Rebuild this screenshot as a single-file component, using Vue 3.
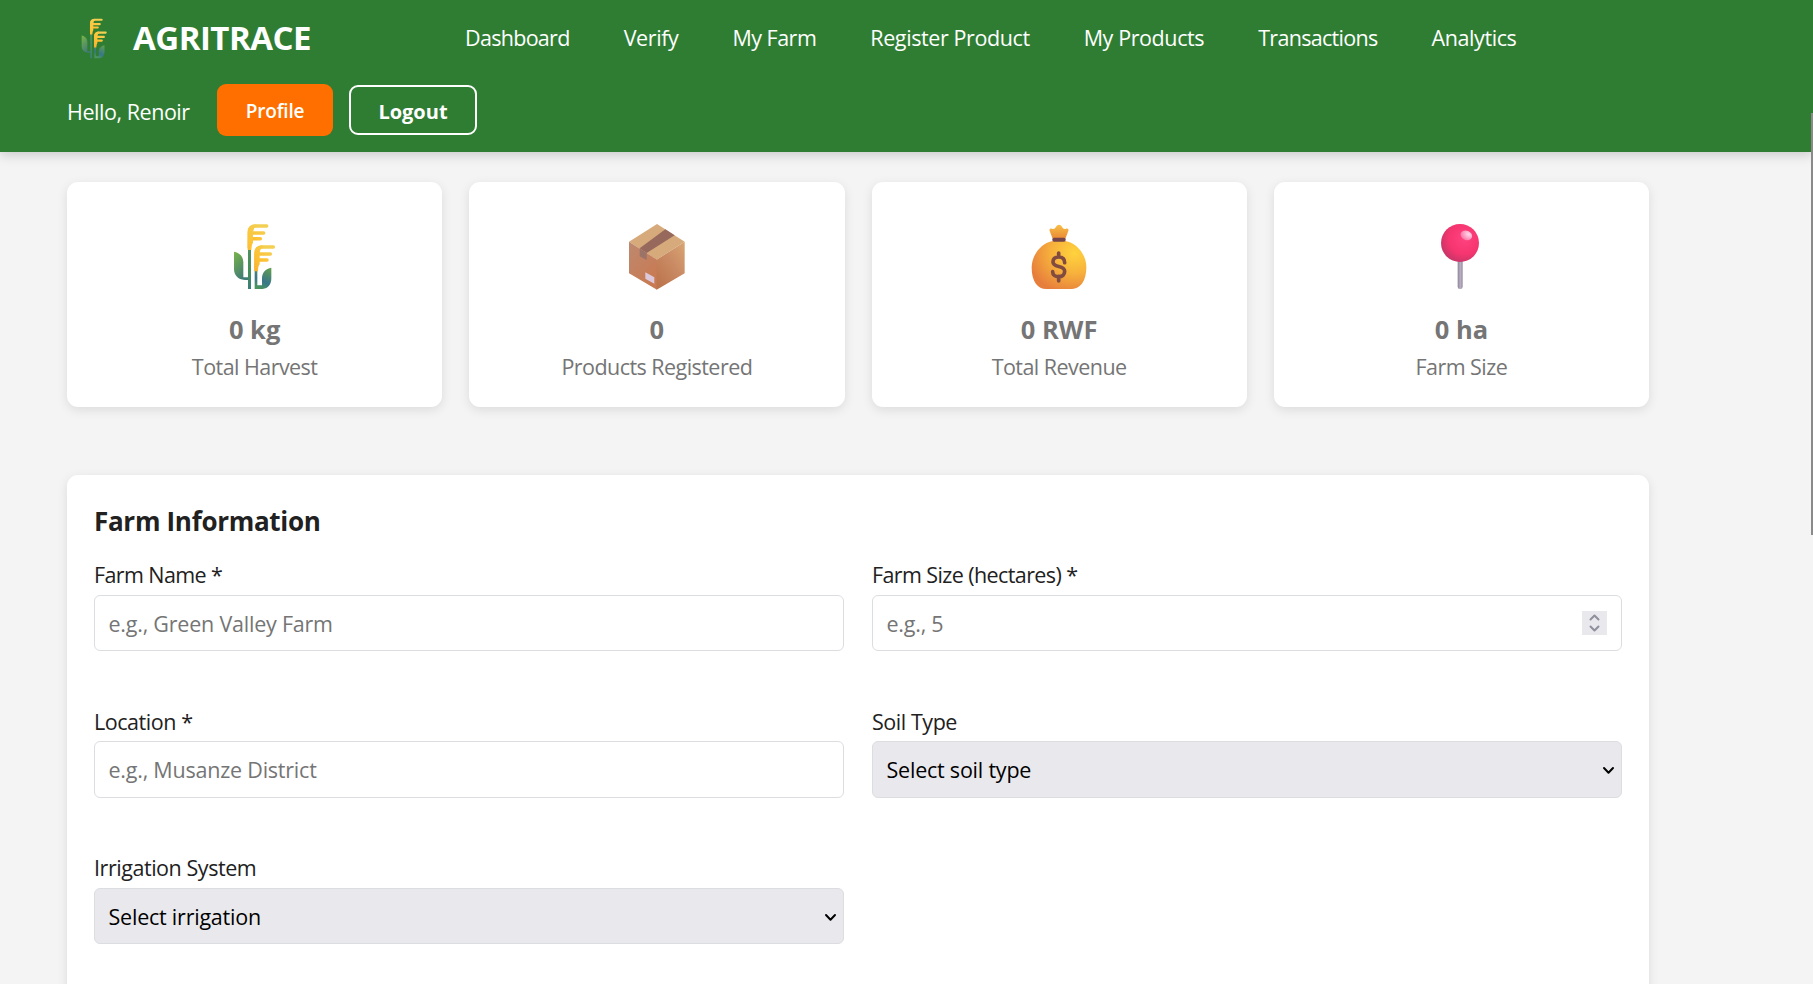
<script setup>
import { h } from 'vue'

const links = [
  { label: 'Dashboard', cls: 'tight' },
  { label: 'Verify', cls: '' },
  { label: 'My Farm', cls: 'snug' },
  { label: 'Register Product', cls: '' },
  { label: 'My Products', cls: '' },
  { label: 'Transactions', cls: 'tight' },
  { label: 'Analytics', cls: '' }
]

const stats = [
  { icon: 'crop', value: '0 kg', label: 'Total Harvest' },
  { icon: 'box', value: '0', label: 'Products Registered' },
  { icon: 'money', value: '0 RWF', label: 'Total Revenue' },
  { icon: 'pin', value: '0 ha', label: 'Farm Size' }
]

// Shared between the brand mark and the harvest card.
const CropIcon = () =>
  h('svg', { viewBox: '0 0 270 270' }, [
    h('path', { fill: 'url(#leafL)', d: 'M72 125c15 2 27 13 28 31v46h15v8h-11c-20-2-32-14-32-33z' }),
    h('path', { fill: 'url(#leafR)', d: 'M184 173c-17 3-28 14-28 33v20h-14v-46h-8v57h24c16-1 26-13 26-32z' }),
    h('path', { fill: 'url(#stem)', d: 'M114 112h9v125h-9z' }),
    h('g', { fill: 'none', stroke: 'url(#grain)', 'stroke-width': 10.5, 'stroke-linecap': 'round', 'stroke-linejoin': 'round' }, [
      h('path', { d: 'M118 113V68q0-20 21-20h31M121 69h40M121 86h30' }),
      h('path', { d: 'M138 176v-46q0-19 21-19h31M141 132h40M141 150h30' })
    ]),
    h('path', { fill: 'url(#grain)', d: 'M113 120V65q0-20 22-22l7 3q-12 5-13 20v33q-4 3-5 21zM133 184v-55q0-21 22-23l7 3q-12 5-13 20v34q-5 4-5 21z' })
  ])
</script>

<template>
  <div class="page">
    <svg class="defs" width="0" height="0" aria-hidden="true">
      <defs>
        <linearGradient id="leafL" x1="0" y1="0" x2=".5" y2="1"><stop stop-color="#79b546" /><stop offset="1" stop-color="#417b78" /></linearGradient>
        <linearGradient id="leafR" x1=".8" y1="0" x2=".4" y2="1"><stop stop-color="#5f9d50" /><stop offset=".65" stop-color="#38768a" /><stop offset="1" stop-color="#49945d" /></linearGradient>
        <linearGradient id="stem" x1="0" y1="0" x2="0" y2="1"><stop stop-color="#4f9160" /><stop offset=".6" stop-color="#458c5b" /><stop offset="1" stop-color="#397f79" /></linearGradient>
        <linearGradient id="grain" x1="0" y1="1" x2=".5" y2="0"><stop stop-color="#f5a82c" /><stop offset=".5" stop-color="#fdc235" /><stop offset="1" stop-color="#f3cf52" /></linearGradient>
        <linearGradient id="boxL" x1="0" y1="0" x2=".6" y2="1"><stop stop-color="#bd8970" /><stop offset="1" stop-color="#c97a52" /></linearGradient>
        <linearGradient id="boxR" x1="1" y1="0" x2=".2" y2="1"><stop stop-color="#d9a673" /><stop offset=".5" stop-color="#c98a63" /><stop offset="1" stop-color="#bd754d" /></linearGradient>
        <radialGradient id="bag" cx=".78" cy=".25" r=".85"><stop stop-color="#ffd33d" /><stop offset=".5" stop-color="#f7b13c" /><stop offset="1" stop-color="#e77f3c" /></radialGradient>
        <linearGradient id="bagTop" x1="0" y1="0" x2="0" y2="1"><stop stop-color="#f9c044" /><stop offset="1" stop-color="#e98937" /></linearGradient>
        <radialGradient id="ball" cx=".62" cy=".38" r=".65"><stop stop-color="#ff4280" /><stop offset=".65" stop-color="#f5356f" /><stop offset="1" stop-color="#c93569" /></radialGradient>
        <linearGradient id="needle"><stop stop-color="#8e8497" /><stop offset=".55" stop-color="#b9aec5" /><stop offset="1" stop-color="#93889c" /></linearGradient>
        <radialGradient id="shine" cx=".65" cy=".3" r=".7"><stop stop-color="#ffd9ec" /><stop offset="1" stop-color="#ff78a8" /></radialGradient>
      </defs>
    </svg>

    <header class="header">
      <div class="bar">
        <div class="brand"><CropIcon class="logo" /><span class="brand-name">AGRITRACE</span></div>
        <nav class="nav">
          <a v-for="l in links" :key="l.label" :class="l.cls">{{ l.label }}</a>
        </nav>
      </div>
      <div class="user">
        <span class="hello">Hello, Renoir</span>
        <button class="btn profile">Profile</button>
        <button class="btn logout">Logout</button>
      </div>
    </header>

    <main class="content">
      <section class="stats">
        <article v-for="s in stats" :key="s.label" class="stat">
          <CropIcon v-if="s.icon === 'crop'" class="emoji" />
          <svg v-else-if="s.icon === 'box'" class="emoji" viewBox="4 0 270 270">
            <path fill="#d7aa7b" d="M139 42l83 53-84 54-83-54z" />
            <path fill="url(#boxL)" d="M55 95l84 54v90l-84-49z" />
            <path fill="url(#boxR)" d="M222 95l-84 54v90l84-49z" />
            <path fill="#96695c" d="M164 58l28 18-84 53-21-14z" />
            <path fill="#9c7367" d="M87 115l21 14v21l-21-11z" />
            <path fill="#dcc9dc" d="M104 187l27 15v19l-27-15z" />
          </svg>
          <svg v-else-if="s.icon === 'money'" class="emoji" viewBox="-2 0 270 270">
            <path fill="url(#bagTop)" d="M114 86l-9-23c-2-6 2-9 7-7 5 3 9 0 11-4l5-6q5-4 10 0l5 6c2 4 6 7 11 4 5-2 9 1 7 7l-9 23z" />
            <path fill="url(#bag)" d="M114 93h38c34 6 63 40 63 79 0 43-20 65-43 65H94c-24 0-43-22-43-64 0-40 30-74 63-80z" />
            <rect x="113" y="83" width="40" height="12" rx="5" fill="#73454b" />
            <path fill="none" stroke="#814b40" stroke-width="11" stroke-linecap="round" d="M132 129v12m0 58v14M150 158c0-11-7-17-18-17s-17 6-17 15c0 19 35 8 35 28 0 10-7 16-18 16s-18-6-18-15" />
          </svg>
          <svg v-else class="emoji" viewBox="-9 0 270 270">
            <rect x="116" y="145" width="15" height="92" rx="7" fill="url(#needle)" />
            <circle cx="123" cy="99" r="57" fill="url(#ball)" />
            <ellipse cx="142" cy="76" rx="18" ry="14" transform="rotate(22 142 76)" fill="url(#shine)" />
          </svg>
          <strong class="value">{{ s.value }}</strong>
          <span class="caption">{{ s.label }}</span>
        </article>
      </section>

      <section class="form-card">
        <h2 class="title">Farm Information</h2>
        <form class="grid">
          <label class="field"><span class="lbl required">Farm Name *</span>
            <input class="control" type="text" placeholder="e.g., Green Valley Farm" />
          </label>
          <label class="field"><span class="lbl required">Farm Size (hectares) *</span>
            <span class="wrap">
              <input class="control" type="text" inputmode="decimal" placeholder="e.g., 5" />
              <svg class="spinner" viewBox="0 0 25 24"><path d="M8.5 8.5l4-4 4 4M8.5 15.5l4 4 4-4" /></svg>
            </span>
          </label>
          <label class="field"><span class="lbl">Location *</span>
            <input class="control" type="text" placeholder="e.g., Musanze District" />
          </label>
          <label class="field"><span class="lbl">Soil Type</span>
            <span class="wrap">
              <select class="control select"><option>Select soil type</option></select>
              <svg class="chevron" viewBox="0 0 13 9"><path d="M2 2l4.5 4.7L11 2" /></svg>
            </span>
          </label>
          <label class="field"><span class="lbl">Irrigation System</span>
            <span class="wrap">
              <select class="control select"><option>Select irrigation</option></select>
              <svg class="chevron" viewBox="0 0 13 9"><path d="M2 2l4.5 4.7L11 2" /></svg>
            </span>
          </label>
        </form>
      </section>
    </main>
    <div class="scroll-thumb"></div>
  </div>
</template>

<style>
body { margin: 0; background: #f4f4f4; overflow: hidden; }
</style>

<style scoped>
.page { position: relative; height: 984px; overflow: hidden; background: #f4f4f4; color: #212121; font-family: "Open Sans", "Noto Sans", sans-serif; font-size: 21.5px; line-height: 30px; }
.page * { box-sizing: border-box; }
.defs { position: absolute; }
.header { height: 152px; padding-left: 67px; background: #2e7d32; color: #fff; box-shadow: 0 2px 12px rgba(0, 0, 0, .2); position: relative; }
.bar { display: flex; height: 75px; align-items: center; }
.brand { display: flex; align-items: center; width: 398px; gap: 11px; }
.logo { width: 55px; height: 55px; flex: none; }
.brand-name { font-size: 33px; font-weight: 700; letter-spacing: -.5px; white-space: nowrap; }
.nav { display: flex; gap: 54px; white-space: nowrap; letter-spacing: -.4px; padding-top: 1px; }
.tight { letter-spacing: -.7px; }
.snug { letter-spacing: -.5px; }
.user { display: flex; height: 70px; align-items: center; }
.hello { width: 150px; letter-spacing: -.45px; white-space: nowrap; padding-top: 3px; }
.btn { height: 50px; padding: 2px 0 0; font-family: inherit; color: #fff; border-radius: 9px; }
.profile { width: 116px; height: 52px; border: 0; background: #ff6f00; font-size: 19px; font-weight: 600; letter-spacing: -.2px; }
.logout { width: 128px; margin-left: 16px; border: 2px solid #fff; background: transparent; font-size: 20px; font-weight: 700; }
.content { width: 1582px; margin: 30px 0 0 67px; }
.stats { display: grid; grid-template-columns: repeat(4, 1fr); gap: 27px; }
.stat { height: 225px; padding-top: 28px; border-radius: 11px; background: #fff; color: #757575; display: flex; flex-direction: column; align-items: center; box-shadow: 0 3px 11px rgba(0, 0, 0, .1); }
.emoji { width: 90px; height: 90px; }
.value { font-size: 25.5px; line-height: 38px; margin-top: 10px; }
.caption { line-height: 38px; letter-spacing: -.55px; }
.form-card { height: 620px; margin-top: 68px; padding: 27px; border-radius: 11px; background: #fff; box-shadow: 0 3px 11px rgba(0, 0, 0, .1); }
.title { margin: 0; font-size: 26px; line-height: 38px; letter-spacing: -.3px; }
.grid { display: grid; grid-template-columns: 1fr 1fr; column-gap: 28px; row-gap: 53.8px; margin-top: 18px; }
.field { display: flex; flex-direction: column; letter-spacing: -.45px; }
.lbl { line-height: 34px; height: 36.6px; }
.required { letter-spacing: -.6px; }
.wrap { position: relative; display: block; }
.control { display: block; width: 100%; height: 56.3px; padding: 1px 13.5px 0; border: 1px solid #dcdde0; border-radius: 6px; background: #fff; color: #000; font: inherit; letter-spacing: -.22px; outline: 0; }
.control::placeholder { color: #757575; opacity: 1; }
.select { appearance: none; background: #e9e9ed; }
.spinner { position: absolute; right: 15px; top: 16px; width: 25px; height: 24px; background: #e9e9ed; fill: none; stroke: #8f8f9d; stroke-width: 2; stroke-linecap: round; stroke-linejoin: round; }
.chevron { position: absolute; right: 7px; top: 25px; width: 13px; height: 9px; fill: none; stroke: #000; stroke-width: 2; stroke-linecap: round; stroke-linejoin: round; }
.scroll-thumb { position: absolute; right: 0; top: 113px; width: 2px; height: 422px; background: #8a8a8a; }
</style>
